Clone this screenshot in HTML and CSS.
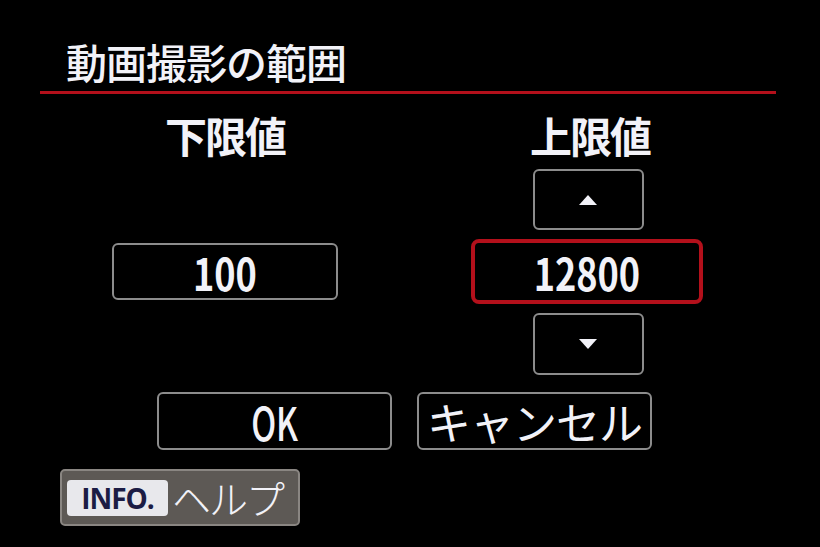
FILE: index.html
```html
<!DOCTYPE html>
<html lang="ja">

<head>
    <meta charset="UTF-8">
    <title>動画撮影の範囲</title>
    <link rel="stylesheet" href="styles.css">
</head>

<body>
    <div class="screen">
        <!-- Título del menú con la línea roja -->
        <h1 class="menu-title">動画撮影の範囲</h1>
        <div class="title-rule"></div>

        <!-- Dos columnas: límite inferior y superior -->
        <div class="range-grid">
            <div class="col-label col-low">下限値</div>
            <div class="col-label col-high">上限値</div>

            <div class="step-btn col-high">
                <span class="tri tri-up"></span>
            </div>

            <div class="value-box col-low"><span class="narrow">100</span></div>
            <div class="value-box selected col-high"><span class="narrow">12800</span></div>

            <div class="step-btn col-high">
                <span class="tri tri-down"></span>
            </div>
        </div>

        <!-- Botones de confirmación -->
        <div class="actions">
            <div class="action-btn ok"><span class="narrow">OK</span></div>
            <div class="action-btn cancel">キャンセル</div>
        </div>

        <!-- Ayuda -->
        <div class="help">
            <span class="info-key">INFO.</span>
            <span class="help-text">ヘルプ</span>
        </div>
    </div>
</body>

</html>
```

FILE: styles.css
```css
* {
    margin: 0;
    padding: 0;
    box-sizing: border-box;
}

body {
    background: #000;
    color: #f2f2f8;
    font-family: "Noto Sans CJK JP", "Noto Sans", sans-serif;
}

.screen {
    width: 820px;
    height: 547px;
    overflow: hidden;
    padding-top: 38px;
}

/* Encabezado */
.menu-title {
    font-size: 41px;
    font-weight: 500;
    line-height: 46px;
    padding-left: 66px;
    letter-spacing: -1px;
}

.title-rule {
    height: 3px;
    margin: 7px 44px 0 40px;
    background: #b3101b;
}

/* Rejilla de valores */
.range-grid {
    display: grid;
    grid-template-columns: 226px 232px;
    grid-template-rows: 50px 61px 65px 62px;
    column-gap: 133px;
    row-gap: 9px;
    margin: 16px 0 0 112px;
}

.col-low {
    grid-column: 1;
}

.col-high {
    grid-column: 2;
}

.col-label {
    grid-row: 1;
    font-size: 42px;
    font-weight: 700;
    line-height: 50px;
    letter-spacing: -2px;
    text-align: center;
}

.col-label.col-high {
    padding-left: 6px;
}

.step-btn {
    width: 111px;
    justify-self: center;
    border: 2px solid #8c8c8c;
    border-radius: 6px;
    display: flex;
    align-items: center;
    justify-content: center;
    margin-left: 2px;
}

.tri {
    width: 0;
    height: 0;
    border-left: 9px solid transparent;
    border-right: 9px solid transparent;
}

.tri-up {
    border-bottom: 10px solid #f2f2f8;
}

.tri-down {
    border-top: 10px solid #f2f2f8;
}

/* Texto latino más estrecho, como la fuente de la cámara */
.narrow {
    display: inline-block;
    transform: scaleX(0.82);
}

.value-box {
    grid-row: 3;
    display: flex;
    align-items: center;
    justify-content: center;
    border: 2px solid #8c8c8c;
    border-radius: 6px;
    font-size: 44px;
    font-weight: 700;
    line-height: 1;
}

.value-box.col-low {
    height: 57px;
    align-self: center;
}

.value-box.selected {
    border: 4px solid #b3101b;
    border-radius: 8px;
}

/* Botones OK / Cancelar */
.actions {
    display: flex;
    gap: 25px;
    margin: 17px 0 0 157px;
}

.action-btn {
    width: 235px;
    height: 58px;
    border: 2px solid #8c8c8c;
    border-radius: 6px;
    display: flex;
    align-items: center;
    justify-content: center;
    line-height: 1;
}

.action-btn.ok {
    font-size: 46px;
    font-weight: 500;
}

.action-btn.ok .narrow {
    transform: scaleX(0.72);
}

.action-btn.cancel {
    font-weight: 400;
    font-size: 44px;
    letter-spacing: -1px;
}

/* Botón de ayuda */
.help {
    display: flex;
    align-items: center;
    gap: 4px;
    width: 240px;
    height: 57px;
    margin: 19px 0 0 60px;
    padding: 0 5px;
    background: #5d5955;
    border: 2px solid #8a8682;
    border-radius: 5px;
    white-space: nowrap;
}

.info-key {
    flex-shrink: 0;
    background: #e8e8ec;
    color: #1c1c44;
    font-family: "Open Sans", "Noto Sans", sans-serif;
    font-weight: 700;
    font-size: 28px;
    line-height: 36px;
    letter-spacing: -1px;
    border-radius: 4px;
    width: 101px;
    text-align: center;
}

.help-text {
    font-size: 39px;
    font-weight: 300;
    line-height: 1;
    letter-spacing: -2px;
}
```
